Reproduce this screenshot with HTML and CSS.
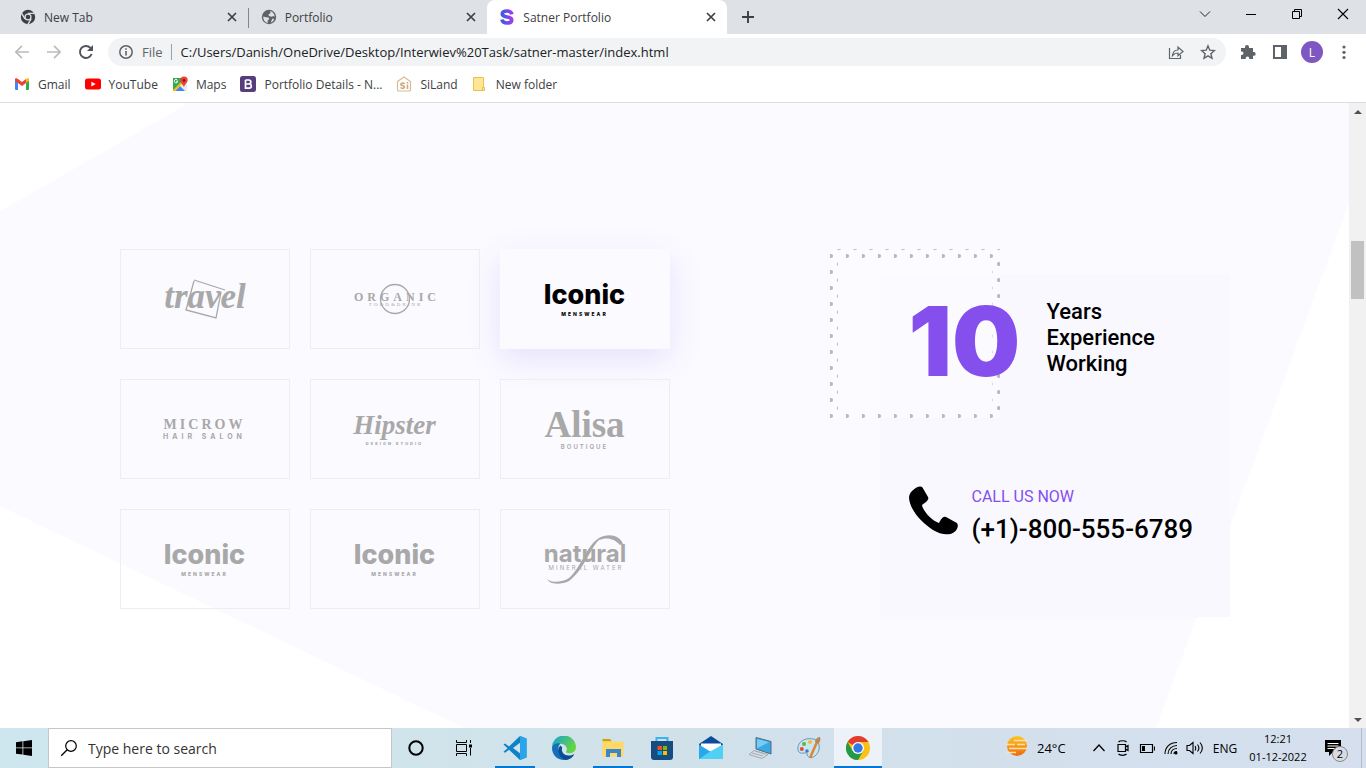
FILE: index.html
```
<!DOCTYPE html>
<html lang="en">
<head>
<meta charset="utf-8">
<title>Satner Portfolio</title>
<link rel="stylesheet" href="styles.css">
</head>
<body>
<div class="screen">
  <header class="chrome">
    <div class="tabstrip">
      <div class="tabs">
        <div class="tab">
          <svg class="tab-icon" viewBox="0 0 16 16"><circle cx="8" cy="8" r="7.2" fill="#3c4043"/><circle cx="8" cy="8" r="3.6" fill="#dee1e6"/><circle cx="8" cy="8" r="2.3" fill="#3c4043"/><path d="M8 4.4h6.4M4.9 9.8 1.7 4.3M11.1 9.8l-3.2 5.5" stroke="#dee1e6" stroke-width="1.3"/></svg>
          <span class="tab-title">New Tab</span>
          <button class="close" aria-label="Close New Tab"><svg viewBox="0 0 16 16"><path d="m4 4 8 8m0-8-8 8" stroke="#3c4043" stroke-width="1.7"/></svg></button>
        </div>
        <div class="tab divided">
          <svg class="tab-icon" viewBox="0 0 16 16"><circle cx="8" cy="8" r="7.2" fill="#5f6368"/><path d="M2.2 7.4 5 8.2l2.6.3.6 1.6-1.6 1.6.2 2.2C3.800 13.200 2 10.800 2.200 7.400zM9.200 2.100l.3 2.100-2 1 .4 1.800 2.800.8 1.600-.9 1.500.8C13.500 5 11.500 2.700 9.200 2.100zM13.200 10l-1.500-.4-1 1.300-.8 2.600c1.600-.6 2.700-1.800 3.300-3.500z" fill="#dee1e6"/></svg>
          <span class="tab-title">Portfolio</span>
          <button class="close" aria-label="Close Portfolio"><svg viewBox="0 0 16 16"><path d="m4 4 8 8m0-8-8 8" stroke="#3c4043" stroke-width="1.7"/></svg></button>
        </div>
        <div class="tab active">
          <svg class="tab-icon" viewBox="0 0 16 16"><defs><linearGradient id="sg"><stop offset="0" stop-color="#3f5be0"/><stop offset="1" stop-color="#9a3df0"/></linearGradient></defs><path d="M12.800 5.400C12.300 3 10.500 2 8 2 5 2 3.300 3.200 3.300 5c0 4.200 9.400 1.800 9.400 6 0 2-1.900 3-4.700 3s-4.600-1.300-5-3.500" fill="none" stroke="url(#sg)" stroke-width="3.700"/></svg>
          <span class="tab-title">Satner Portfolio</span>
          <button class="close" aria-label="Close Satner Portfolio"><svg viewBox="0 0 16 16"><path d="m4 4 8 8m0-8-8 8" stroke="#3c4043" stroke-width="1.7"/></svg></button>
        </div>
        <button class="new-tab" aria-label="New tab"><svg viewBox="0 0 16 16"><path d="M8 2v12M2 8h12" stroke="#3c4043" stroke-width="1.900"/></svg></button>
      </div>
      <div class="window-buttons">
        <button aria-label="Search tabs"><svg viewBox="0 0 16 16"><path d="m3 5.500 5 5 5-5" fill="none" stroke="#222"/></svg></button>
        <button aria-label="Minimise"><svg viewBox="0 0 16 16"><path d="M3 8.500h10" stroke="#000"/></svg></button>
        <button aria-label="Restore"><svg viewBox="0 0 16 16"><path d="M3.500 5.500h7v7h-7zM5.500 5.500v-2h7v7h-2" fill="none" stroke="#000"/></svg></button>
        <button aria-label="Close window"><svg viewBox="0 0 16 16"><path d="m3 3 10 10M13 3 3 13" stroke="#000" stroke-width="1.100"/></svg></button>
      </div>
    </div>
    <div class="toolbar">
      <div class="nav">
        <button aria-label="Back"><svg viewBox="0 0 16 16"><path d="M15 8H2m6-6.200L1.800 8 8 14.200" fill="none" stroke="#babcbe" stroke-width="1.700"/></svg></button>
        <button aria-label="Forward"><svg viewBox="0 0 16 16"><path d="M1 8h13M8 1.800 14.200 8 8 14.200" fill="none" stroke="#babcbe" stroke-width="1.700"/></svg></button>
        <button aria-label="Reload"><svg viewBox="0 0 16 16"><path d="M13.600 10A6 6 0 1 1 12.400 3.900L14 5.500" fill="none" stroke="#505357" stroke-width="1.900"/><path d="M15 1v6H9z" fill="#505357"/></svg></button>
      </div>
      <div class="omnibox">
        <svg class="info" viewBox="0 0 16 16"><circle cx="8" cy="8" r="6.200" fill="none" stroke="#5f6368" stroke-width="1.500"/><path d="M8 7v4.500M8 4.300v1.500" stroke="#5f6368" stroke-width="1.600"/></svg>
        <label class="scheme" for="url">File</label>
        <input id="url" class="url" type="text" value="C:/Users/Danish/OneDrive/Desktop/Interwiev%20Task/satner-master/index.html">
        <button aria-label="Share"><svg viewBox="0 0 16 16"><path d="M1.500 4v10.500h11V11" fill="none" stroke="#5f6368" stroke-width="1.200"/><path d="M4.500 11.500c.4-3.700 2.200-5.400 5.500-5.500V3l5 4.500-5 4.200V9c-2.400 0-4 .7-5.500 2.500z" fill="none" stroke="#5f6368" stroke-width="1.200"/></svg></button>
        <button aria-label="Bookmark"><svg viewBox="0 0 16 16"><path d="m8 1.900 1.800 4.300 4.600.4-3.500 3.100 1.100 4.600L8 11.900l-4 2.400 1.100-4.600-3.500-3.100 4.600-.4z" fill="none" stroke="#5f6368" stroke-width="1.400"/></svg></button>
      </div>
      <div class="actions">
        <button aria-label="Extensions"><svg viewBox="0 0 16 16"><path d="M1 4h4V3a2 2 0 0 1 4 0v1h4v4h.8a1.900 1.900 0 0 1 0 3.800H13V15H9.200v-.8a1.700 1.700 0 0 0-3.500 0v.8H1v-4h.8a1.700 1.700 0 0 0 0-3.400H1z" fill="#5f6368"/></svg></button>
        <button aria-label="Side panel"><svg viewBox="0 0 16 16"><path d="M1 1h14v14H1zm2 2v10h6V3z" fill="#5f6368" fill-rule="evenodd"/></svg></button>
        <button class="avatar" aria-label="Profile L">L</button>
        <button aria-label="Menu"><svg viewBox="0 0 16 16"><g fill="#5f6368"><circle cx="8" cy="3" r="1.600"/><circle cx="8" cy="8.300" r="1.600"/><circle cx="8" cy="13.500" r="1.600"/></g></svg></button>
      </div>
    </div>
    <nav class="bookmarks" aria-label="Bookmarks">
      <a href="#"><svg viewBox="0 0 16 16"><path d="M1 3h3v11H2a1 1 0 0 1-1-1z" fill="#4285f4"/><path d="M12 3h3v10a1 1 0 0 1-1 1h-2z" fill="#34a853"/><path d="M1 3.500C1 2 2.700 1.900 4 2.900l4 3 4-3v4L8 10 4 7 1 4.800z" fill="#ea4335"/><path d="M12 2.900c1.300-1 3-.9 3 .6v1.300L12 7z" fill="#fbbc04"/></svg>Gmail</a>
      <a href="#"><svg viewBox="0 0 16 16"><rect y="2.500" width="16" height="11" rx="2.500" fill="#f00"/><path d="m6.400 5.700 4.300 2.400-4.300 2.400z" fill="#fff"/></svg>YouTube</a>
      <a href="#"><svg viewBox="0 0 16 16"><path d="M1 2h9l3 5v8H1z" fill="#34a853"/><path d="m1 15 12-12 2 5v7z" fill="#e8eaed"/><path d="m3 15 5-5 5 5z" fill="#4285f4"/><path d="m1 14 9-9 1.500 1.500L3 15H1z" fill="#fbbc04"/><path d="M12 11C10 7.500 8.300 6.500 8.300 4.300a3.700 3.700 0 0 1 7.400 0C15.700 6.500 13.500 7.500 12 11z" fill="#ea4335"/><circle cx="12" cy="4.400" r="1.300" fill="#811411"/><path d="M5.800 5.200H4.200m1.500.1A1.700 1.700 0 1 1 5.300 4" stroke="#fff" fill="none"/></svg>Maps</a>
      <a href="#"><svg viewBox="0 0 16 16"><rect width="16" height="16" rx="2.500" fill="#563d7c"/><path d="M5.500 4h3.300a2 2 0 0 1 0 4H5.500m0 0h3.700a2.100 2.100 0 0 1 0 4.200H5.500zV4" fill="none" stroke="#fff" stroke-width="1.700"/></svg>Portfolio Details - N...</a>
      <a href="#"><svg viewBox="0 0 16 16"><path d="M1.500 5.500 8 .9l6.500 4.600v8.200c0 .8-.5 1.300-1.300 1.300H2.800c-.8 0-1.300-.5-1.300-1.300z" fill="none" stroke="#d9bb94" stroke-width="1.200"/><path d="M8.800 7.800C6.800 6.300 4.500 7.300 5 8.600c.4 1 3.500.8 3.500 2.400 0 1.500-2.600 1.800-4 .5M11.500 8.500V13M11.500 6v1.500" fill="none" stroke="#cfa878" stroke-width="1.600"/></svg>SiLand</a>
      <a href="#"><svg viewBox="0 0 16 16"><path d="M1.500 1.500h10v10h1v3h-11z" fill="#ffe694" stroke="#e9c248"/><path d="M10.500 14v-3h1" fill="none" stroke="#e9c248"/></svg>New folder</a>
    </nav>
  </header>

  <div class="viewport">
    <main class="page">
      <div class="container">
        <section class="brands" aria-label="Clients">
          <a class="brand" href="#"><svg class="art" viewBox="0 0 80 50"><path d="m29 6 31 10m-4 2-5 26-30-8 8-29" fill="none" stroke="#a8a8a8" stroke-width="1.300"/><text class="script" x="40" y="34" font-size="35">travel</text></svg></a>
          <a class="brand" href="#"><svg class="art" viewBox="0 0 80 50"><circle cx="40" cy="25" r="14.500" fill="none" stroke="#a8a8a8" stroke-width="1.300"/><text class="serif" x="42" y="27" font-size="12" letter-spacing="4">ORGANIC</text><text class="serif thin" x="41" y="32" font-size="5" letter-spacing="2">FOOD&amp;DRINK</text></svg></a>
          <a class="brand current" href="#"><span class="iconic">Iconic</span><span class="tag">MENSWEAR</span></a>
          <a class="brand" href="#"><span class="microw">MICROW</span><span class="tag salon">HAIR SALON</span></a>
          <a class="brand" href="#"><span class="hipster">Hipster</span><span class="tag studio">DESIGN STUDIO</span></a>
          <a class="brand" href="#"><span class="alisa">Alisa</span><span class="tag boutique">BOUTIQUE</span></a>
          <a class="brand" href="#"><span class="iconic">Iconic</span><span class="tag">MENSWEAR</span></a>
          <a class="brand" href="#"><span class="iconic">Iconic</span><span class="tag">MENSWEAR</span></a>
          <a class="brand" href="#"><svg class="art" viewBox="0 0 80 50"><text class="sans" x="40" y="28" font-size="24">natural</text><text class="sans light" x="41" y="36" font-size="6" letter-spacing="2">MINERAL WATER</text><path d="M2 44c1 5 15 5 22 0C36 34 41 12 54 4c9-5 21-3 24 6l-3 1C69 4 61 3 54 6 46 13 39 36 24 47 16 51 3 51 2 44z" fill="#a8a8a8"/></svg></a>
        </section>
        <aside class="experience">
          <svg class="dots" viewBox="0 0 170 169"><defs><pattern id="dotgrid" width="16" height="16" patternUnits="userSpaceOnUse"><circle cx="1" cy="7" r="2.100"/><circle cx="9" cy="15" r="2.100"/><circle cx="9" cy="-1" r="2.100"/></pattern></defs><path d="M0 0h170v169H0z" fill="#fff" opacity=".25"/><path d="M0 0h170v169H0zM8 9v152h154.500V9z" fill="url(#dotgrid)" fill-rule="evenodd"/></svg>
          <div class="years">
            <strong class="number">10</strong>
            <p class="caption">Years<br>Experience<br>Working</p>
          </div>
          <div class="call">
            <svg class="phone" viewBox="0 0 49 49"><path d="M3 5C8 0 12-.5 13.500 1.500L19 11c1 2 0 4-6 8 1 6 10 16 17 18 2-4 4-7.500 7-6l10 5.500c3 1.500 2 6-1 9C41 50 32 49 24 44 12 36 1 24 0 12 0 9 1 7 3 5z"/></svg>
            <div>
              <p class="call-label">CALL US NOW</p>
              <p class="call-number">(+1)-800-555-6789</p>
            </div>
          </div>
        </aside>
      </div>
    </main>
    <div class="scrollbar" aria-hidden="true">
      <span class="arrow up"></span>
      <div class="track"><span class="thumb"></span></div>
      <span class="arrow down"></span>
    </div>
  </div>

  <footer class="taskbar">
    <button class="task" aria-label="Start"><svg class="i16" viewBox="0 0 16 16"><path d="m0 2.200 6.500-.9v6.200H0zM7.300 1.200 16 0v7.500H7.300zM0 8.300h6.500v6.200L0 13.700zM7.300 8.300H16V16l-8.700-1.200z"/></svg></button>
    <label class="search"><svg class="i18" viewBox="0 0 18 18"><circle cx="11" cy="7" r="5.300" fill="none" stroke="#000" stroke-width="1.200"/><path d="m7.200 10.800-6 6" stroke="#000" stroke-width="1.300"/></svg><input type="text" aria-label="Search" placeholder="Type here to search"></label>
    <button class="task" aria-label="Cortana"><svg class="i16" viewBox="0 0 16 16"><circle cx="8" cy="8" r="6.700" fill="none" stroke="#000" stroke-width="2"/></svg></button>
    <button class="task" aria-label="Task view"><svg class="i16" viewBox="0 0 16 16"><path d="M.5 0v2.500h10V0M.5 16v-2.500h10V16M.5 4.500h10v7H.5zM14.500 0v3M14.500 8v7.500" fill="none" stroke="#000"/><path d="M13 4.500h3v3h-3z"/></svg></button>
    <div class="apps">
      <button class="task running" aria-label="Visual Studio Code"><svg class="i24" viewBox="0 0 24 24"><path d="M17 0 6 10.500 2 7.500.5 8.500l4 3.700-4 3.600 1.500 1L6 13.800 17 24l6.500-2.500v-19zM18 6v12l-8-6z" fill="#0c82c7" fill-rule="evenodd"/><path d="m17 0 6.500 2.700v18.600L17 24z" fill="#2aa5ea"/></svg></button>
      <button class="task" aria-label="Edge"><svg class="i24" viewBox="0 0 24 24"><defs><linearGradient id="edge" x1="0" y1="0" x2="1" y2=".5"><stop offset="0" stop-color="#139fd9"/><stop offset="1" stop-color="#67d641"/></linearGradient></defs><path d="M0 12A12 12 0 0 1 24 11c0 4-3 6.300-7 6.300-3 0-3.500-1.500-2.300-2.700C16 10 11 7 6.500 8 3 8.500 1 10 0 12z" fill="url(#edge)"/><path d="M0 12c.5-4 5-5.500 8.500-4.500C5 10 6 18 13 20.500c3.500 1 7 0 9-2.500C20 22 16 24 12 24 5 24 0 18.500 0 12z" fill="#1470b8"/><path d="M8.500 9.500C4.500 13 6 22 14 24c4-.5 7-3 8.200-6-7 4-14-.5-12-6.500z" fill="#0c4c92"/></svg></button>
      <button class="task running" aria-label="File Explorer"><svg class="i24" viewBox="0 0 24 24"><path d="M1.500 3H9l2 2.500H1.500z" fill="#d9a100"/><path d="M1.500 5.500h21v15h-21z" fill="#ffd866"/><path d="M5 13h15v8h-4v-4H9v4H5z" fill="#3b86c9"/></svg></button>
      <button class="task" aria-label="Store"><svg class="i24" viewBox="0 0 24 24"><path d="M6.500 7V2h11v5" fill="none" stroke="#36b4ee" stroke-width="2"/><path d="M1 5h22v16a3 3 0 0 1-3 3H4a3 3 0 0 1-3-3z" fill="#174c80"/><path d="M7.500 10H12v4H7.500z" fill="#f25022"/><path d="M13 10h4v4h-4z" fill="#7fba00"/><path d="M7.500 15H12v4H7.500z" fill="#00a4ef"/><path d="M13 15h4v4h-4z" fill="#ffb900"/></svg></button>
      <button class="task" aria-label="Mail"><svg class="i24" viewBox="0 0 24 24"><path d="M0 8 12 0l12 8v7H0z" fill="#0b4d9b"/><path d="M2 7.500h20V16H2z" fill="#fff"/><path d="M0 8.500 12 16 24 8.500V23H0z" fill="#28a8ea"/><path d="m0 23 12-8L24 8.500V23z" fill="#50d0f5"/></svg></button>
      <button class="task" aria-label="This PC"><svg class="i24" viewBox="0 0 24 24"><path d="m8 1.500 15 4V18L8 13z" fill="#3ba7e5" stroke="#536b7d"/><path d="m9 3 12 3.200-12 6z" fill="#75cdf6"/><path d="m6 14.500 14 4-6 4-13-4z" fill="#d8dde1" stroke="#8c979f" stroke-width=".7"/><path d="m4 17 11 3m-8-5 10 3" stroke="#a5afb6"/></svg></button>
      <button class="task" aria-label="Paint"><svg class="i24" viewBox="0 0 24 24"><path d="M2 8C5 3 13 1 19 4c5 4 4 12-1 16-4 3-8 1-8-2s-5 1-8-2c-2-2-1-6 0-8z" fill="#c9e5f2" stroke="#6799b5"/><circle cx="7" cy="8" r="2" fill="#61b44c"/><circle cx="13" cy="6" r="2" fill="#f3bd32"/><circle cx="4.800" cy="13" r="2" fill="#df4b39"/><circle cx="10" cy="15" r="1.800" fill="#3a7ed0"/><path d="m20 6-7 16" stroke="#df842f" stroke-width="2.500"/><path d="M18 6c0-3 3-5 5-5 1 3 0 5-2 7z" fill="#b9875a"/></svg></button>
      <button class="task running focused" aria-label="Chrome"><svg class="i24" viewBox="0 0 24 24"><circle cx="12" cy="12" r="12" fill="#fbc116"/><path d="M12 12 1.600 6A12 12 0 0 1 22.400 6H12z" fill="#e33b2e"/><path d="M1.600 6A12 12 0 0 0 12 24l5.200-9L12 12l-5.200 3z" fill="#229a4a"/><circle cx="12" cy="12" r="6" fill="#fff"/><circle cx="12" cy="12" r="4.700" fill="#3578e5"/></svg></button>
    </div>
    <div class="tray">
      <button class="weather"><svg class="i24" viewBox="0 0 24 24"><defs><linearGradient id="sun" x2="0" y2="1"><stop offset="0" stop-color="#ffc420"/><stop offset="1" stop-color="#ef6b0b"/></linearGradient></defs><circle cx="12" cy="10" r="10" fill="url(#sun)"/><path d="M9 4.500h14M1 8.500h9m2 0h8M4 12.500h18M1 16.500h10" stroke="#fbe2b4" stroke-width="1.500"/></svg>24°C</button>
      <button aria-label="Hidden icons"><svg class="i16" viewBox="0 0 16 16"><path d="m2.500 11 5.500-6 5.500 6" fill="none" stroke="#000" stroke-width="1.300"/></svg></button>
      <button aria-label="Meet now"><svg class="i16" viewBox="0 0 16 16"><path d="M3.500 2C5 .3 10 .3 11.500 2M3.500 14c1.500 1.700 6.500 1.700 8 0M3 4.500h7.500v7H3zM10.500 7l2.500-1.500v5L10.500 9" fill="none" stroke="#000" stroke-width="1.200"/></svg></button>
      <button aria-label="Battery"><svg class="i16" viewBox="0 0 16 16"><path d="M1.500 4.500h12v8h-12zM15.500 6.500v4" fill="none" stroke="#000" stroke-width="1.200"/><path d="M3 6h3v5H3z"/></svg></button>
      <button aria-label="Wi-Fi"><svg class="i16" viewBox="0 0 16 16"><path d="M2 14C2 7 7 2.500 14 2.500M5 14c0-5 4-8.500 9-8.500M8 14c0-3.300 2.500-5.500 6-5.500M11 14c0-1.500 1-2.500 3-2.500" fill="none" stroke="#000" stroke-width="1.100"/><circle cx="13" cy="13" r="1.500"/></svg></button>
      <button aria-label="Volume"><svg class="i18" viewBox="0 0 18 18"><path d="M1 6.500h2.500L7 3.500v11l-3.500-3H1zM9 7c1 1.500 1 3 0 4.500M11.500 5.500c2 2.500 2 4.500 0 7M14 3.500c3 3.500 3 7.500 0 11" fill="none" stroke="#000" stroke-width="1.100"/></svg></button>
      <button class="lang">ENG</button>
      <button class="clock"><span>12:21</span><span>01-12-2022</span></button>
      <button class="notify" aria-label="2 notifications"><svg class="i16" viewBox="0 0 16 16"><path d="M0 0h16v12H8l-4 4v-4H0z"/><path d="M2.500 3.500h11M2.500 6h11M2.500 8.500h7" stroke="#fff"/></svg><span class="badge">2</span></button>
    </div>
  </footer>
</div>
</body>
</html>
```
FILE: styles.css
```
* { box-sizing: border-box; }
body { margin: 0; font-family: "Open Sans", "Noto Sans", sans-serif; font-size: 12px; color: #3c4043; }
p { margin: 0; }
button { display: flex; align-items: center; justify-content: center; padding: 0; border: 0; background: none; font: inherit; color: inherit; }
input { min-width: 0; padding: 0; border: 0; outline: 0; background: none; font: inherit; color: inherit; }
a { color: inherit; text-decoration: none; }
svg { display: block; width: 16px; height: 16px; flex: none; }
.i18 { width: 18px; height: 18px; }
.i24 { width: 24px; height: 24px; }

.screen { display: flex; flex-direction: column; height: 100vh; }

/* Browser frame */
.chrome { background: #fff; border-bottom: 1px solid #dadce0; }
.tabstrip { display: flex; justify-content: space-between; height: 34px; padding-left: 8px; background: #dee1e6; }
.tabs { display: flex; flex: 0 1 761px; min-width: 0; }
.tab { display: flex; align-items: center; gap: 8px; flex: 0 1 240px; min-width: 0; padding: 0 8px 0 12px; }
.tab.divided { border-left: 1px solid #80868b; border-image: linear-gradient(transparent 24%, #80868b 24% 80%, transparent 80%) 1; }
.tab.active { background: #fff; border-radius: 8px 8px 0 0; }
.tab-title { flex: 1; white-space: nowrap; }
.new-tab { flex: none; width: 42px; }
.window-buttons { display: flex; }
.window-buttons button { width: 46px; height: 28px; }
.toolbar { display: flex; align-items: center; height: 36px; }
.nav { display: flex; gap: 16px; padding: 0 14px; }
.omnibox { display: flex; align-items: center; flex: 1; height: 28px; padding: 0 10px; border-radius: 14px; background: #f1f3f4; font-size: 13px; }
.scheme { margin: 0 9px 0 8px; padding-right: 8px; border-right: 1px solid #9aa0a6; line-height: 16px; color: #5f6368; }
.url { flex: 1; color: #202124; }
.omnibox button { width: 16px; margin-left: 16px; }
.actions { display: flex; align-items: center; gap: 16px; padding: 0 14px; }
.avatar { width: 22px; height: 22px; margin: 0 -3px; border-radius: 50%; background: #7e57c2; color: #fff; }
.bookmarks { display: flex; align-items: center; gap: 14px; height: 32px; padding: 0 14px 4px; }
.bookmarks a { display: flex; align-items: center; gap: 8px; white-space: nowrap; }

/* Web page */
.viewport { display: flex; flex: 1; min-height: 0; }
.page { position: relative; flex: 1; min-width: 0; padding: 146px 20px 0; overflow: hidden; background: #fff; }
.page::before { content: ""; position: absolute; inset: 0; background: #fbfaff; clip-path: polygon(14% 0, 100% 0, 100% 16%, 85.700% 100%, 34.400% 100%, 0 64.500%, 0 17.300%); }
.container { position: relative; display: flex; justify-content: space-between; align-items: flex-start; max-width: 1110px; margin: 0 auto; }
.brands { display: grid; grid-template-columns: repeat(3, 170px); gap: 30px 20px; }
.brand { display: flex; flex-direction: column; align-items: center; justify-content: center; height: 100px; border: 1px solid #eeeef2; color: #a8a8a8; }
.brand.current { border-color: #fbfaff; background: #fbfaff; box-shadow: 0 10px 30px rgba(118, 85, 235, .15); color: #000; }
.art { width: 80px; height: 50px; overflow: visible; }
.art text { fill: #a8a8a8; text-anchor: middle; }
.art .script, .hipster { font-family: "Liberation Serif", serif; font-style: italic; font-weight: 700; }
.art .serif { font-family: "Liberation Serif", serif; font-weight: 700; }
.art .thin { font-weight: 400; }
.art .sans { font-family: Inter, sans-serif; font-weight: 700; }
.art .light { font-weight: 400; }
.iconic { font: 800 27px/30px Inter, sans-serif; }
.tag { font: 800 5px/8px Inter, sans-serif; letter-spacing: 2px; }
.microw { font: 700 14px/16px "Liberation Serif", serif; letter-spacing: 3px; }
.salon { font-size: 7px; font-weight: 700; letter-spacing: 4px; }
.hipster { font-size: 27px; line-height: 30px; }
.studio { font-size: 4px; }
.alisa { font: 700 37px/36px "Liberation Serif", serif; }
.boutique { font-size: 6px; font-weight: 600; }

.experience { position: relative; width: 350px; min-height: 343px; margin-top: 25px; padding: 25px 29px 0; background: #f9f8ff; font-family: Roboto, sans-serif; color: #000; }
.dots { position: absolute; left: -50px; top: -25px; width: 170px; height: 169px; fill: #b8b8bd; }
.years { position: relative; display: flex; height: 84px; }
.number { flex: none; width: 138px; font-family: Inter, sans-serif; font-size: 96px; font-weight: 900; line-height: 84px; color: #854fee; }
.caption { font-size: 22px; font-weight: 500; line-height: 26px; }
.call { display: flex; gap: 14px; margin-top: 103px; }
.phone { width: 49px; height: 49px; }
.call-label { font-size: 16px; line-height: 22px; color: #854fee; }
.call-number { font-size: 26px; font-weight: 500; line-height: 42px; white-space: nowrap; }

.scrollbar { display: flex; flex-direction: column; width: 17px; background: #f1f1f1; }
.arrow { display: flex; align-items: center; justify-content: center; height: 17px; }
.arrow::before { content: ""; border: 4px solid transparent; }
.up::before { border-top: 0; border-bottom-color: #505050; }
.down::before { border-bottom: 0; border-top-color: #505050; }
.track { flex: 1; padding: 121px 2px 0; }
.thumb { display: block; height: 58px; background: #c1c1c1; }

/* Taskbar */
.taskbar { display: flex; height: 40px; background: linear-gradient(90deg, #cee7ee, #d1e1ea 50%, #d5dfee); color: #000; }
.task { width: 48px; }
.search { display: flex; align-items: center; gap: 10px; flex: 0 1 344px; padding: 0 11px; border: 1px solid #c6c6c6; background: #fff; font-size: 14px; }
.search input { flex: 1; }
.search input::placeholder { color: #333; opacity: 1; }
.apps { display: flex; gap: 1px; margin-left: 3px; }
.running { background: linear-gradient(#0078d7, #0078d7) bottom / 40px 2px no-repeat; }
.focused { background-color: #edf2f8; background-size: 48px 2px; }
.tray { display: flex; margin-left: auto; padding-right: 4px; }
.tray::after { content: ""; width: 1px; margin-left: 8px; background: #b3bcc8; }
.tray button { width: 24px; }
.tray .weather { width: 68px; gap: 8px; margin-right: 14px; justify-content: flex-start; font-size: 13px; }
.tray .lang { width: 36px; }
.tray .clock { flex-direction: column; width: 70px; font-size: 11px; line-height: 18px; }
.tray .notify { position: relative; width: 40px; }
.badge { position: absolute; left: 19px; top: 18px; width: 16px; height: 16px; border: 1px solid #888; border-radius: 50%; background: #d8dce2; font-size: 11px; line-height: 14px; }
```
